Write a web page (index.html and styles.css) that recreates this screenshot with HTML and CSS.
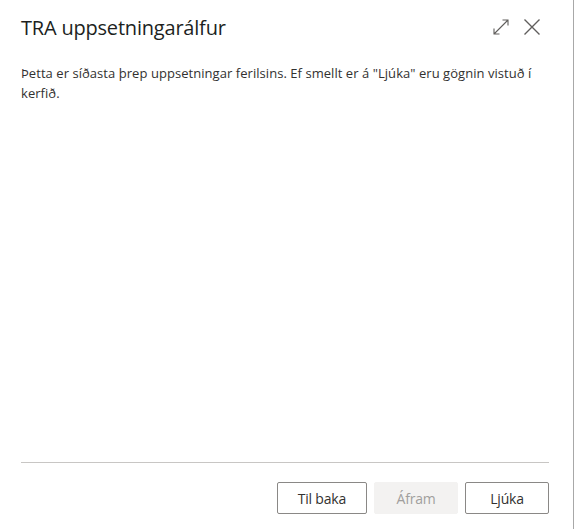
FILE: index.html
```html
<!DOCTYPE html>
<html lang="is">
<head>
<meta charset="utf-8">
<title>TRA uppsetningarálfur</title>
<link rel="stylesheet" href="styles.css">
</head>
<body>
<div class="dialog">
  <div class="header">
    <h1 class="title">TRA uppsetningarálfur</h1>
    <div class="actions">
      <button class="icon-btn" aria-label="Stækka">
        <svg width="18" height="18" viewBox="0 0 18 18"><path d="M2 16 L16 2 M10.5 2 H16 V7.5 M2 10.5 V16 H7.5" fill="none" stroke="#605e5c" stroke-width="1.1"/></svg>
      </button>
      <button class="icon-btn" aria-label="Loka">
        <svg width="18" height="18" viewBox="0 0 18 18"><path d="M1.5 1.5 L16.5 16.5 M16.5 1.5 L1.5 16.5" fill="none" stroke="#605e5c" stroke-width="1.4"/></svg>
      </button>
    </div>
  </div>
  <div class="content">
    <p class="text">Þetta er síðasta þrep uppsetningar ferilsins. Ef smellt er á "Ljúka" eru gögnin vistuð í kerfið.</p>
  </div>
  <div class="footer">
    <button class="btn">Til baka</button>
    <button class="btn disabled" disabled>Áfram</button>
    <button class="btn">Ljúka</button>
  </div>
</div>
</body>
</html>
```
FILE: styles.css
```css
html, body {
  margin: 0;
  padding: 0;
  background: #ffffff;
}
body {
  font-family: "Open Sans", "Noto Sans", "Liberation Sans", sans-serif;
  color: #323130;
}
.dialog {
  width: 573px;
  height: 529px;
  border-right: 1px solid #a8a8a8;
  display: flex;
  flex-direction: column;
  box-sizing: content-box;
}
.header {
  display: flex;
  align-items: flex-start;
  justify-content: space-between;
  padding: 14px 32px 0 21px;
  height: 46px;
}
.title {
  margin: 0;
  font-size: 20px;
  font-weight: 400;
  letter-spacing: -0.2px;
  color: #201f1e;
  line-height: 28px;
}
.actions {
  display: flex;
  gap: 13px;
  padding-top: 4px;
}
.icon-btn {
  border: none;
  background: none;
  padding: 0;
  width: 18px;
  height: 18px;
  display: block;
}
.icon-btn svg { display: block; }
.content {
  flex: 1;
  padding: 0 21px;
}
.text {
  margin: 3px 0 0;
  font-size: 13px;
  line-height: 20px;
  letter-spacing: 0.05px;
  color: #323130;
}
.footer {
  margin: 0 24px 0 21px;
  border-top: 1px solid #c8c6c4;
  padding: 19px 0 15px;
  display: flex;
  justify-content: flex-end;
  gap: 7px;
}
.btn {
  font-family: "Open Sans", "Noto Sans", "Liberation Sans", sans-serif;
  font-size: 14px;
  color: #323130;
  background: #ffffff;
  border: 1px solid #8a8886;
  border-radius: 2px;
  height: 32px;
  min-width: 84px;
  padding: 0 20px;
  letter-spacing: -0.2px;
}
.btn.disabled {
  background: #f3f2f1;
  border-color: #f3f2f1;
  color: #a19f9d;
}
```
